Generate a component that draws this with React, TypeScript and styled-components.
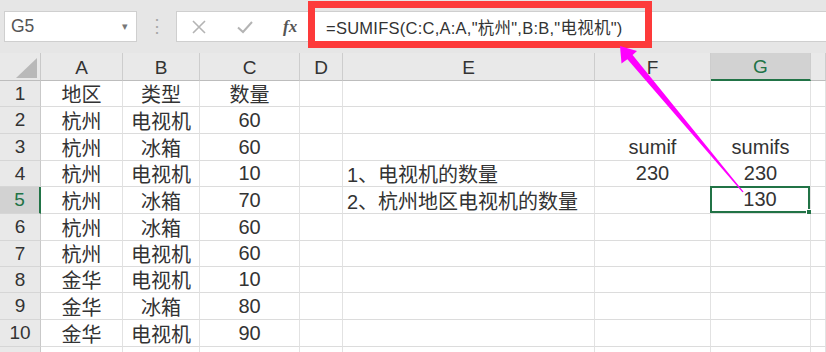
import React from "react";
import styled, { createGlobalStyle } from "styled-components";

const GlobalStyle = createGlobalStyle`
  body {
    margin: 0;
    background: #ffffff;
    font-family: "Liberation Sans", "Noto Sans CJK SC", sans-serif;
  }
`;

const GREEN = "#217346";

const columns = ["A", "B", "C", "D", "E", "F", "G", ""];
const colWidths = [41, 82, 77, 100, 43, 252, 116, 100];
const rowHeights = [26, 27, 27, 26, 27, 27, 26, 26, 27, 27];

type Row = (string | undefined)[];

const rows: Row[] = [
  ["地区", "类型", "数量", "", "", "", ""],
  ["杭州", "电视机", "60", "", "", "", ""],
  ["杭州", "冰箱", "60", "", "", "sumif", "sumifs"],
  ["杭州", "电视机", "10", "", "1、电视机的数量", "230", "230"],
  ["杭州", "冰箱", "70", "", "2、杭州地区电视机的数量", "", "130"],
  ["杭州", "冰箱", "60", "", "", "", ""],
  ["杭州", "电视机", "60", "", "", "", ""],
  ["金华", "电视机", "10", "", "", "", ""],
  ["金华", "冰箱", "80", "", "", "", ""],
  ["金华", "电视机", "90", "", "", "", ""],
];

const ACTIVE_ROW = 5;
const ACTIVE_COL = 6;

export default function App() {
  return (
    <>
      <GlobalStyle />
      <Page>
        <Toolbar>
          <NameBox>
            <span>G5</span>
            <Caret>▾</Caret>
          </NameBox>
          <Dots>⋮</Dots>
          <FormulaBox>
            <IconBtn>
              <svg width="16" height="16" viewBox="0 0 16 16">
                <path d="M2 2 L14 14 M14 2 L2 14" stroke="#b4b4b4" strokeWidth="1.6" fill="none" />
              </svg>
            </IconBtn>
            <IconBtn>
              <svg width="18" height="16" viewBox="0 0 18 16">
                <path d="M2 8.5 L7 13 L16 3" stroke="#b4b4b4" strokeWidth="2" fill="none" />
              </svg>
            </IconBtn>
            <Fx>fx</Fx>
            <FormulaText>=SUMIFS(C:C,A:A,"杭州",B:B,"电视机")</FormulaText>
          </FormulaBox>
          <Highlight />
        </Toolbar>

        <Sheet $cols={colWidths} $rows={rowHeights}>
          <Corner>
            <svg width="22" height="20" viewBox="0 0 22 20">
              <polygon points="21,0 21,20 0,20" fill="#b9b9b9" />
            </svg>
          </Corner>
          {columns.map((c, i) => (
            <ColHead key={c + i} $active={i === ACTIVE_COL}>
              {c}
            </ColHead>
          ))}
          {rows.map((r, ri) => (
            <React.Fragment key={ri}>
              <RowHead $active={ri + 1 === ACTIVE_ROW}>{ri + 1}</RowHead>
              {r.map((v, ci) => (
                <Cell
                  key={ci}
                  $align={ci === 4 ? "left" : "center"}
                  $active={ri + 1 === ACTIVE_ROW && ci === ACTIVE_COL}
                >
                  {v}
                </Cell>
              ))}
              <Cell $align="center" />
            </React.Fragment>
          ))}
          <RowHead />
          {columns.map((_, i) => (
            <Cell key={"x" + i} $align="center" />
          ))}
        </Sheet>

        <Arrow width="826" height="352" viewBox="0 0 826 352">
          <polygon
            points="743.6,191.8 742.4,192.2 627.4,59.2 621.5,63.5 620,46 637,51 632.6,55"
            fill="#f0f"
          />
        </Arrow>
      </Page>
    </>
  );
}

const Page = styled.div`
  position: relative;
  width: 826px;
  height: 352px;
  overflow: hidden;
  background: #ffffff;
`;

const Toolbar = styled.div`
  position: relative;
  height: 53px;
  background: #e6e6e6;
  display: flex;
  align-items: flex-start;
  padding-top: 11px;
  box-sizing: border-box;
`;

const NameBox = styled.div`
  margin-left: 4px;
  width: 133px;
  height: 31px;
  box-sizing: border-box;
  background: #fff;
  border: 1px solid #cfcfcf;
  display: flex;
  align-items: center;
  justify-content: space-between;
  padding: 0 8px 0 6px;
  font-size: 17.5px;
  color: #555;
`;

const Caret = styled.span`
  font-size: 11px;
  color: #777;
`;

const Dots = styled.div`
  width: 39px;
  text-align: center;
  color: #a8a8a8;
  font-size: 18px;
  line-height: 31px;
`;

const FormulaBox = styled.div`
  flex: 1;
  height: 31px;
  box-sizing: border-box;
  background: #fff;
  border: 1px solid #cfcfcf;
  border-right: none;
  display: flex;
  align-items: center;
  padding-left: 14px;
`;

const IconBtn = styled.div`
  width: 45px;
  display: flex;
  align-items: center;
`;

const Fx = styled.div`
  width: 42px;
  font-family: "Liberation Serif", serif;
  font-style: italic;
  font-weight: bold;
  font-size: 17px;
  color: #555;
  margin-left: 2px;
`;

const FormulaText = styled.div`
  font-size: 16.5px;
  color: #333;
  letter-spacing: 0.25px;
  margin-left: 1px;
  white-space: nowrap;
`;

const Highlight = styled.div`
  position: absolute;
  left: 308px;
  top: 1px;
  width: 344px;
  height: 47px;
  box-sizing: border-box;
  border: 7px solid #fd3a3a;
`;

const Sheet = styled.div<{ $cols: number[]; $rows: number[] }>`
  display: grid;
  grid-template-columns: ${(p) => p.$cols.map((w) => w + "px").join(" ")} 1fr;
  grid-template-rows: 28px ${(p) => p.$rows.map((h) => h + "px").join(" ")} 20px;
  background: #e9e9e9;
`;

const Corner = styled.div`
  background: #e9e9e9;
  border-right: 1px solid #c9c9c9;
  border-bottom: 1px solid #bdbdbd;
  box-sizing: border-box;
  display: flex;
  align-items: flex-end;
  justify-content: flex-end;
  padding: 0 2px 2px 0;
`;

const ColHead = styled.div<{ $active?: boolean }>`
  box-sizing: border-box;
  background: ${(p) => (p.$active ? "#d2d2d2" : "#e9e9e9")};
  border-right: 1px solid #cdcdcd;
  border-bottom: ${(p) => (p.$active ? `2px solid ${GREEN}` : "1px solid #bdbdbd")};
  display: flex;
  align-items: center;
  justify-content: center;
  font-size: 19px;
  color: ${(p) => (p.$active ? GREEN : "#333")};
  padding-top: 2px;
`;

const RowHead = styled.div<{ $active?: boolean }>`
  box-sizing: border-box;
  background: ${(p) => (p.$active ? "#d2d2d2" : "#e9e9e9")};
  border-right: ${(p) => (p.$active ? `2px solid ${GREEN}` : "1px solid #c9c9c9")};
  border-bottom: 1px solid #d6d6d6;
  display: flex;
  align-items: center;
  justify-content: center;
  font-size: 19px;
  color: ${(p) => (p.$active ? GREEN : "#333")};
`;

const Cell = styled.div<{ $align: "left" | "center"; $active?: boolean }>`
  position: relative;
  box-sizing: border-box;
  background: #fff;
  border-right: 1px solid #e2e2e2;
  border-bottom: 1px solid #dcdcdc;
  display: flex;
  align-items: center;
  justify-content: ${(p) => (p.$align === "left" ? "flex-start" : "center")};
  padding-left: ${(p) => (p.$align === "left" ? "4px" : "0")};
  font-size: 20px;
  color: #333;
  white-space: nowrap;
  ${(p) =>
    p.$active &&
    `
    box-shadow: inset 0 0 0 2px ${GREEN};
    margin: -1px 0 0 -1px;
    &::after {
      content: "";
      position: absolute;
      right: -3px;
      bottom: -3px;
      width: 5px;
      height: 5px;
      background: ${GREEN};
      border: 1px solid #fff;
    }
  `}
`;

const Arrow = styled.svg`
  position: absolute;
  left: 0;
  top: 0;
  pointer-events: none;
`;
